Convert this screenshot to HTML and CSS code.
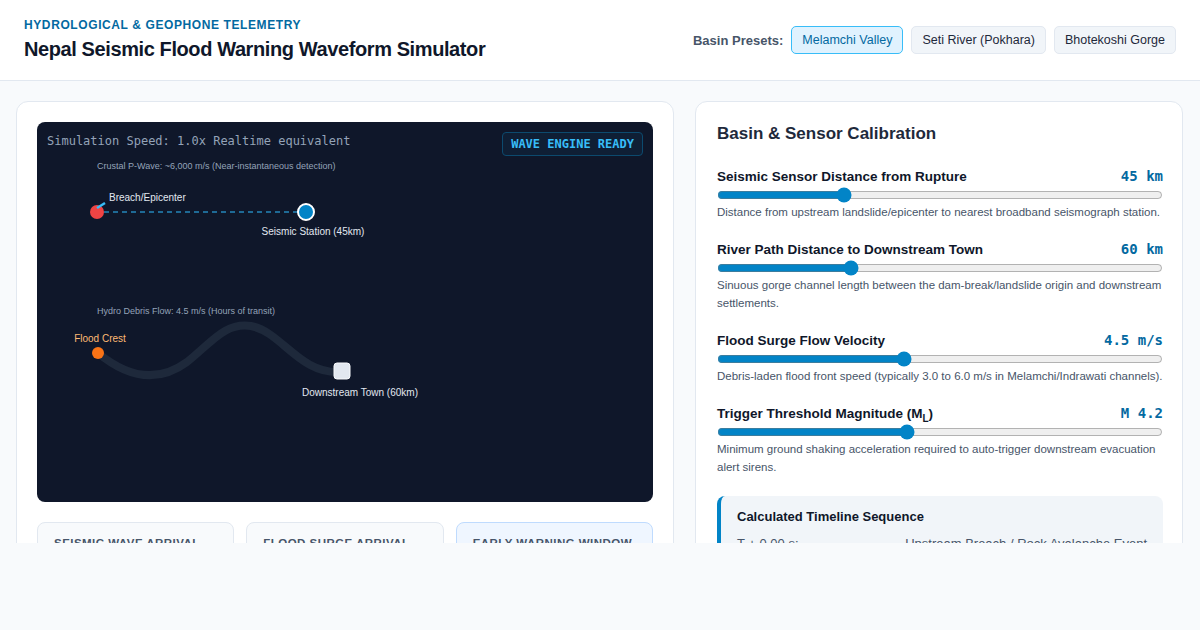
FILE: index.html
```html
<!DOCTYPE html>
<html lang="en">
<head>
<meta charset="utf-8">
<title>Nepal Seismic Flood Warning Waveform Simulator</title>
<link rel="stylesheet" href="styles.css">
</head>
<body>
<header class="topbar">
  <div class="brand">
    <div class="eyebrow">Hydrological &amp; Geophone Telemetry</div>
    <h1 class="title">Nepal Seismic Flood Warning Waveform Simulator</h1>
  </div>
  <div class="presets">
    <span class="presets-label">Basin Presets:</span>
    <button class="preset preset-active">Melamchi Valley</button>
    <button class="preset">Seti River (Pokhara)</button>
    <button class="preset">Bhotekoshi Gorge</button>
  </div>
</header>

<main class="layout">
  <section class="card sim-card">
    <div class="canvas">
      <div class="canvas-head">
        <span class="speed">Simulation Speed: 1.0x Realtime equivalent</span>
        <span class="badge">WAVE ENGINE READY</span>
      </div>
      <svg class="diagram" width="617" height="380" viewBox="0 0 617 380">
        <text x="60" y="47" class="lbl-small">Crustal P-Wave: ~6,000 m/s (Near-instantaneous detection)</text>
        <line x1="67" y1="90" x2="262" y2="90" stroke="#1e6a96" stroke-width="2" stroke-dasharray="5 4"/>
        <circle cx="60" cy="90" r="7" fill="#ef4444"/>
        <line x1="60" y1="86" x2="68" y2="81" stroke="#38bdf8" stroke-width="2.5"/>
        <text x="72" y="79" class="lbl">Breach/Epicenter</text>
        <circle cx="269" cy="90" r="8" fill="#0284c7" stroke="#ffffff" stroke-width="2"/>
        <text x="276" y="113" class="lbl" text-anchor="middle">Seismic Station (45km)</text>

        <text x="60" y="192" class="lbl-small">Hydro Debris Flow: 4.5 m/s (Hours of transit)</text>
        <path d="M61,231 C90,255 120,262 150,240 C175,220 188,200 214,204 C245,210 262,252 303,250" fill="none" stroke="#1e293b" stroke-width="8" stroke-linecap="round"/>
        <circle cx="61" cy="231" r="6" fill="#f97316"/>
        <text x="63" y="220" class="lbl lbl-orange" text-anchor="middle">Flood Crest</text>
        <rect x="297" y="241" width="16" height="16" rx="3" fill="#e2e8f0" stroke="#f8fafc" stroke-width="1"/>
        <text x="323" y="274" class="lbl" text-anchor="middle">Downstream Town (60km)</text>
      </svg>
    </div>
    <div class="stats">
      <div class="stat">
        <div class="stat-label">Seismic Wave Arrival</div>
        <div class="stat-value">7.50 s</div>
      </div>
      <div class="stat">
        <div class="stat-label">Flood Surge Arrival</div>
        <div class="stat-value">3.70 h</div>
      </div>
      <div class="stat stat-accent">
        <div class="stat-label">Early Warning Window</div>
        <div class="stat-value">3.70 h</div>
      </div>
    </div>
  </section>

  <section class="card cal-card">
    <h2 class="cal-title">Basin &amp; Sensor Calibration</h2>

    <div class="field">
      <div class="field-row">
        <span class="field-label">Seismic Sensor Distance from Rupture</span>
        <span class="field-value">45 km</span>
      </div>
      <input class="range" type="range" min="5" max="150" value="45">
      <p class="field-desc">Distance from upstream landslide/epicenter to nearest broadband seismograph station.</p>
    </div>

    <div class="field">
      <div class="field-row">
        <span class="field-label">River Path Distance to Downstream Town</span>
        <span class="field-value">60 km</span>
      </div>
      <input class="range" type="range" min="10" max="180" value="60">
      <p class="field-desc">Sinuous gorge channel length between the dam-break/landslide origin and downstream settlements.</p>
    </div>

    <div class="field">
      <div class="field-row">
        <span class="field-label">Flood Surge Flow Velocity</span>
        <span class="field-value">4.5 m/s</span>
      </div>
      <input class="range" type="range" min="2" max="8" step="0.1" value="4.5">
      <p class="field-desc">Debris-laden flood front speed (typically 3.0 to 6.0 m/s in Melamchi/Indrawati channels).</p>
    </div>

    <div class="field">
      <div class="field-row">
        <span class="field-label">Trigger Threshold Magnitude (M<sub>L</sub>)</span>
        <span class="field-value">M 4.2</span>
      </div>
      <input class="range" type="range" min="2" max="7.2" step="0.1" value="4.2">
      <p class="field-desc">Minimum ground shaking acceleration required to auto-trigger downstream evacuation alert sirens.</p>
    </div>

    <div class="timeline">
      <div class="timeline-title">Calculated Timeline Sequence</div>
      <div class="timeline-row"><span>T + 0.00 s:</span><span>Upstream Breach / Rock Avalanche Event</span></div>
      <div class="timeline-row"><span>T + 7.50 s:</span><span>Seismic Station Detects P-Wave</span></div>
    </div>
  </section>
</main>
</body>
</html>
```

FILE: styles.css
```css
* { box-sizing: border-box; }
html, body { margin: 0; padding: 0; }
body {
  font-family: "Liberation Sans", Arial, Helvetica, sans-serif;
  background: #f8fafc;
  color: #0f172a;
  width: 1200px;
  height: 630px;
  overflow: hidden;
}

.topbar {
  height: 81px;
  background: #ffffff;
  border-bottom: 1px solid #e2e8f0;
  padding: 0 24px;
  display: flex;
  align-items: center;
  justify-content: space-between;
}
.brand { display: flex; flex-direction: column; gap: 2px; }
.eyebrow {
  font-size: 12px;
  line-height: 16px;
  font-weight: 700;
  letter-spacing: 0.05em;
  text-transform: uppercase;
  color: #0369a1;
}
.title {
  margin: 0;
  font-size: 20px;
  line-height: 28px;
  font-weight: 700;
  color: #0f172a;
  letter-spacing: -0.02em;
}
.presets { display: flex; align-items: center; gap: 8px; }
.presets-label { font-size: 13px; font-weight: 700; color: #475569; }
.preset {
  font-family: "Liberation Sans", Arial, sans-serif;
  font-size: 12.5px;
  line-height: 16px;
  padding: 5px 10px;
  border-radius: 5px;
  border: 1px solid #e2e8f0;
  background: #f1f5f9;
  color: #1e293b;
}
.preset-active {
  background: #e0f2fe;
  border-color: #38bdf8;
  color: #0369a1;
}

.layout {
  height: 462px;
  overflow: hidden;
  padding: 20px 16px 0 16px;
  display: grid;
  grid-template-columns: 658px 488px;
  gap: 21px;
  align-items: start;
}
.card {
  background: #ffffff;
  border: 1px solid #e2e8f0;
  border-radius: 12px;
  padding: 20px;
}
.cal-card { padding: 20px 19px 20px 21px; }

.canvas {
  position: relative;
  height: 380px;
  background: #0f172a;
  border-radius: 8px;
  overflow: hidden;
}
.canvas-head {
  position: relative;
  z-index: 1;
  display: flex;
  justify-content: space-between;
  align-items: flex-start;
  padding: 10px 10px 0 10px;
}
.speed {
  font-family: "DejaVu Sans Mono", "Liberation Mono", monospace;
  font-size: 12px;
  line-height: 18px;
  color: #94a3b8;
}
.badge {
  font-family: "DejaVu Sans Mono", "Liberation Mono", monospace;
  font-size: 12px;
  font-weight: 700;
  line-height: 14px;
  color: #38bdf8;
  border: 1px solid #0c4a6e;
  background: rgba(14, 165, 233, 0.06);
  border-radius: 4px;
  padding: 4px 8px;
}
.diagram { position: absolute; left: 0; top: 0; }
.lbl-small {
  font-family: "Liberation Sans", Arial, sans-serif;
  font-size: 9px;
  fill: #94a3b8;
}
.lbl {
  font-family: "Liberation Sans", Arial, sans-serif;
  font-size: 10px;
  fill: #e2e8f0;
}
.lbl-orange { fill: #fdba74; }

.stats {
  margin-top: 20px;
  display: grid;
  grid-template-columns: repeat(3, 1fr);
  gap: 12px;
}
.stat {
  background: #f8fafc;
  border: 1px solid #e2e8f0;
  border-radius: 8px;
  padding: 14px 16px;
}
.stat-accent { background: #eff6ff; border-color: #bfdbfe; }
.stat-label {
  font-size: 11.5px;
  font-weight: 700;
  letter-spacing: 0.04em;
  text-transform: uppercase;
  white-space: nowrap;
  color: #475569;
}
.stat-value {
  margin-top: 6px;
  font-family: "DejaVu Sans Mono", monospace;
  font-size: 20px;
  font-weight: 700;
  color: #0f172a;
}

.cal-title {
  margin: 0 0 21px 0;
  font-size: 17px;
  line-height: 24px;
  font-weight: 700;
  color: #1e293b;
}
.field { margin-bottom: 19px; }
.field-row {
  display: flex;
  justify-content: space-between;
  align-items: baseline;
  height: 18px;
  line-height: 18px;
}
.field-label { font-size: 13.5px; font-weight: 700; color: #0f172a; }
.field-label sub { font-size: 10px; line-height: 0; }
.field-value {
  font-family: "DejaVu Sans Mono", monospace;
  font-size: 14px;
  font-weight: 700;
  color: #0369a1;
}
.range {
  display: block;
  width: 100%;
  height: 16px;
  margin: 2px 0 0 0;
  accent-color: #0284c7;
}
.field-desc {
  margin: 0;
  font-size: 11.5px;
  line-height: 18px;
  color: #475569;
}

.timeline {
  margin-top: 20px;
  background: #f1f5f9;
  border-left: 4px solid #0284c7;
  border-radius: 8px;
  padding: 12px 16px;
}
.timeline-title {
  font-size: 13px;
  font-weight: 700;
  line-height: 18px;
  color: #0f172a;
  margin-bottom: 8px;
}
.timeline-row {
  display: flex;
  justify-content: space-between;
  font-size: 13px;
  line-height: 20px;
  color: #475569;
}
```
